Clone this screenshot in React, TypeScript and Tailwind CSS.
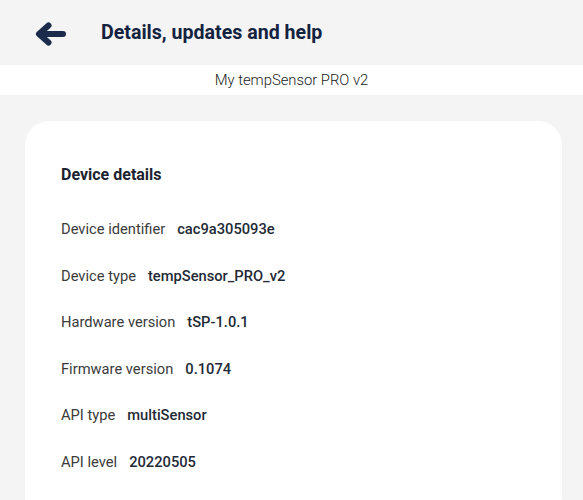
const ROWS: [string, string][] = [
  ["Device identifier", "cac9a305093e"],
  ["Device type", "tempSensor_PRO_v2"],
  ["Hardware version", "tSP-1.0.1"],
  ["Firmware version", "0.1074"],
  ["API type", "multiSensor"],
  ["API level", "20220505"],
];

function BackArrow() {
  return (
    <svg width="34" height="26" viewBox="0 0 34 26" fill="none" aria-hidden>
      <path
        d="M28 13H5M13.5 4.5L4 13L13.5 21.5"
        stroke="#1b2b4b"
        strokeWidth="6"
        strokeLinecap="round"
        strokeLinejoin="round"
      />
    </svg>
  );
}

export default function App() {
  return (
    <div className="min-h-[500px] bg-[#f4f4f4] font-['Roboto',sans-serif]">
      <header className="flex h-[65px] items-center">
        <div className="ml-[35px] mt-[2px] flex w-[66px] items-center">
          <BackArrow />
        </div>
        <h1 className="text-[19.6px] font-bold text-[#13223f]">Details, updates and help</h1>
      </header>

      <div className="flex h-[30px] items-center justify-center bg-white text-[14.8px] font-light text-[#1a1a1a]">
        My tempSensor PRO v2
      </div>

      <main className="ml-[25px] mr-[21px] mt-[26px] rounded-[24px] bg-white px-[36px] pt-[42px] pb-[48px]">
        <h2 className="text-[16px] font-bold text-[#1c2230]">Device details</h2>
        <ul className="mt-[31px] flex flex-col gap-[24.5px]">
          {ROWS.map(([label, value]) => (
            <li key={label} className="flex items-center gap-3 text-[14.7px] leading-[22px]">
              <span className="text-[#3b3b3b]">{label}</span>
              <span className="font-medium text-[#232a36]">{value}</span>
            </li>
          ))}
        </ul>
      </main>
    </div>
  );
}
